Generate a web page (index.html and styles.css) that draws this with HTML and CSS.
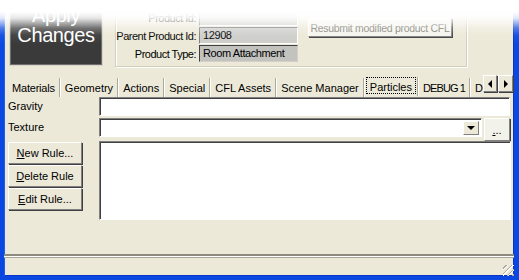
FILE: index.html
```html
<!DOCTYPE html>
<html>
<head>
<title>Product Editor</title>
<meta charset="utf-8">
<link rel="stylesheet" href="styles.css">
</head>
<body>
<div class="screen">
	<div class="window">

		<!-- product header -->
		<div class="top">
			<button class="apply">Apply<br>Changes</button>
			<div class="group">
				<div class="props">
					<span class="plabel">Product Id:</span><div class="field"></div>
					<span class="plabel">Parent Product Id:</span><div class="field">12908</div>
					<span class="plabel">Product Type:</span><div class="field dark">Room Attachment</div>
				</div>
				<button class="resubmit">Resubmit modified product CFL</button>
			</div>
		</div>

		<!-- tabs -->
		<div class="tabbar">
			<div class="tabs">
				<span class="tab first">Materials</span>
				<span class="tab">Geometry</span>
				<span class="tab">Actions</span>
				<span class="tab">Special</span>
				<span class="tab">CFL Assets</span>
				<span class="tab">Scene Manager</span>
				<span class="tab active"><span class="focus">Particles</span></span>
				<span class="tab caps">DEBUG 1</span>
				<span class="tab last">D</span>
			</div>
			<div class="scroller">
				<span class="arrow"><span class="tri left"></span></span>
				<span class="arrow"><span class="tri right"></span></span>
			</div>
		</div>

		<div class="panel">
			<div class="row">
				<span class="lbl">Gravity</span>
				<div class="input"></div>
			</div>
			<div class="row">
				<span class="lbl">Texture</span>
				<div class="combo"><span class="drop"><span class="caret"></span></span></div>
				<button class="dots"><u>.</u>..</button>
			</div>
			<div class="row rules">
				<div class="btns">
					<button class="btn"><u>N</u>ew Rule...</button>
					<button class="btn"><u>D</u>elete Rule</button>
					<button class="btn"><u>E</u>dit Rule...</button>
				</div>
				<div class="list"></div>
			</div>
		</div>

		<div class="status"><span class="grip"></span></div>
	</div>

	<!-- the top of the shot fades out to white -->
	<svg class="fade" width="519" height="44">
		<defs>
			<linearGradient id="fadeGrad" x1="0" y1="0" x2="0" y2="1">
				<stop offset="0" stop-color="#fff" stop-opacity="1"/>
				<stop offset="0.27" stop-color="#fff" stop-opacity="1"/>
				<stop offset="0.41" stop-color="#fff" stop-opacity="0.88"/>
				<stop offset="0.52" stop-color="#fff" stop-opacity="0.6"/>
				<stop offset="0.64" stop-color="#fff" stop-opacity="0.28"/>
				<stop offset="0.8" stop-color="#fff" stop-opacity="0.06"/>
				<stop offset="1" stop-color="#fff" stop-opacity="0"/>
			</linearGradient>
		</defs>
		<rect width="519" height="44" fill="url(#fadeGrad)"/>
	</svg>
</div>
</body>
</html>
```

FILE: styles.css
```css
body{margin: 0; background: #fff;}

.screen {
	position: relative;
	width: 519px;
	height: 280px;
	overflow: hidden;
	background: #fff;
}

.fade {
	position: absolute;
	top: 0;
	left: 0;
	z-index: 20;
	pointer-events: none;
}

.window {
	width: 519px;
	height: 280px;
	box-sizing: border-box;
	display: flex;
	flex-direction: column;
	background: #ece9d8;
	border-left: 4px solid #0b48e2;
	border-right: 5px solid #0b48e2;
	border-bottom: 4px solid #0b48e2;
	box-shadow: inset 1px 0 0 #1c5ff0, inset -1px -1px 0 #0a33c8;
	font-family: "Liberation Sans", Arial, sans-serif;
	font-size: 11px;
	color: #000;
}

button {
	font-family: inherit;
	font-size: 11px;
	color: #000;
	margin: 0;
	padding: 0;
}

/* header */
.top {
	display: flex;
	align-items: flex-end;
	height: 68px;
	flex: none;
	padding-left: 6px;
}

.apply {
	flex: none;
	width: 92px;
	height: 78px;
	margin-bottom: 3px;
	background: #3a3a3a;
	border: 1px solid #6e6e6e;
	box-shadow: 0 0 0 1px #d8d5c6;
	color: #fff;
	font-size: 20px;
	line-height: 20px;
	letter-spacing: -0.4px;
	padding-bottom: 2px;
}

.group {
	display: flex;
	align-items: flex-start;
	width: 352px;
	height: 80px;
	box-sizing: border-box;
	margin-left: 13px;
	margin-bottom: 1px;
	border: 1px solid #d0d0bf;
	box-shadow: inset 1px 1px 0 #fff, 1px 1px 0 #fff;
	padding-top: 21px;
}

.props {
	display: grid;
	grid-template-columns: 83px 99px;
	row-gap: 1px;
	align-items: center;
}

.plabel {
	text-align: right;
	padding-right: 3px;
	white-space: nowrap;
	letter-spacing: -0.5px;
}

.field {
	height: 17px;
	box-sizing: border-box;
	background: #cdcdca;
	border: 1px solid;
	border-color: #808080 #fff #fff #808080;
	padding: 1px 0 0 3px;
	line-height: 13px;
	white-space: nowrap;
	overflow: hidden;
	letter-spacing: -0.4px;
}

.field.dark {
	background: #c2c2bf;
	border-color: #404040 #d4d0c8 #d4d0c8 #404040;
}

.resubmit {
	width: 144px;
	height: 19px;
	margin: 9px 0 0 10px;
	background: #f5f4ee;
	border: 1px solid;
	border-color: #fff #808080 #808080 #fff;
	box-shadow: 1px 1px 0 #404040;
	color: #7a7a70;
	font-size: 10.5px;
	letter-spacing: -0.3px;
	white-space: nowrap;
}

/* tab strip */
.tabbar {
	position: relative;
	height: 19px;
	margin-top: 9px;
	flex: none;
}

.tabs {
	display: flex;
	width: 479px;
	overflow: hidden;
	padding-left: 4px;
	box-sizing: border-box;
	white-space: nowrap;
}

.tab {
	flex: none;
	padding: 3px 4px 0 4px;
	height: 16px;
	line-height: 14px;
	margin-top: 1px;
	border-right: 1px solid #aca899;
	box-shadow: 1px 0 0 #fff;
	margin-right: 1px;
}

.tab.first {
	letter-spacing: -0.2px;
}

.tab.caps {
	letter-spacing: -0.9px;
}

.tab.last {
	border-right: none;
	box-shadow: none;
}

.tab.active {
	padding: 0 1px;
	height: 19px;
	margin-top: 0;
}

.focus {
	display: block;
	height: 17px;
	border: 1px dotted #000;
	padding: 2px 3px 0 3px;
	box-sizing: border-box;
	line-height: 14px;
}

.scroller {
	position: absolute;
	top: -2px;
	left: 479px;
	display: flex;
}

.arrow {
	width: 14px;
	height: 17px;
	box-sizing: border-box;
	background: #ece9d8;
	border: 1px solid;
	border-color: #fff #808080 #808080 #fff;
	box-shadow: 1px 1px 0 #404040;
	display: flex;
	align-items: center;
	justify-content: center;
}

.arrow + .arrow {
	width: 15px;
	margin-left: 1px;
}

.tri {
	border-top: 4px solid transparent;
	border-bottom: 4px solid transparent;
}

.tri.left {
	border-right: 4px solid #000;
}

.tri.right {
	border-left: 4px solid #000;
}

/* tab page */
.panel {
	flex: 1;
	padding: 1px 0 0 4px;
}

.row {
	display: flex;
	margin-bottom: 2px;
}

.lbl {
	width: 91px;
	padding-top: 3px;
}

.input {
	width: 411px;
	height: 19px;
	box-sizing: border-box;
	background: #fff;
	border: 1px solid;
	border-color: #808080 #fff #fff #808080;
	box-shadow: inset 1px 1px 0 #404040;
}

.combo {
	width: 383px;
	height: 19px;
	box-sizing: border-box;
	background: #fff;
	border: 1px solid;
	border-color: #808080 #fff #fff #808080;
	box-shadow: inset 1px 1px 0 #404040;
	display: flex;
	justify-content: flex-end;
	padding: 2px 2px 1px 0;
}

.drop {
	width: 16px;
	height: 14px;
	box-sizing: border-box;
	background: #ece9d8;
	border: 1px solid;
	border-color: #fff #808080 #808080 #fff;
	display: flex;
	align-items: center;
	justify-content: center;
}

.caret {
	border-left: 4px solid transparent;
	border-right: 4px solid transparent;
	border-top: 4px solid #000;
}

.dots {
	width: 26px;
	height: 23px;
	margin-left: 2px;
	background: #f2f1ea;
	border: 1px solid;
	border-color: #fff #808080 #808080 #fff;
	box-shadow: 1px 1px 0 #404040;
	line-height: 10px;
}

.rules {
	margin: -2px 0 0 0;
}

.btns {
	display: flex;
	flex-direction: column;
	gap: 1px;
	width: 74px;
	margin: 1px 17px 0 0;
}

.btn {
	height: 22px;
	background: #ece9d8;
	border: 1px solid;
	border-color: #fff #808080 #808080 #fff;
	box-shadow: 1px 1px 0 #404040;
}

.list {
	width: 412px;
	height: 79px;
	box-sizing: border-box;
	background: #fff;
	border: 1px solid;
	border-color: #808080 #fff #fff #808080;
	box-shadow: inset 1px 1px 0 #404040;
}

/* status bar */
.status {
	position: relative;
	flex: none;
	height: 20px;
	border-top: 2px solid #8d8b80;
	box-shadow: inset 0 1px 0 #fff, inset 0 2px 0 #aca899;
}

.grip {
	position: absolute;
	right: 0;
	bottom: 0;
	width: 11px;
	height: 11px;
	background: repeating-linear-gradient(135deg, transparent 0 2px, #aca899 2px 3px, #fff 3px 4px);
}
```
